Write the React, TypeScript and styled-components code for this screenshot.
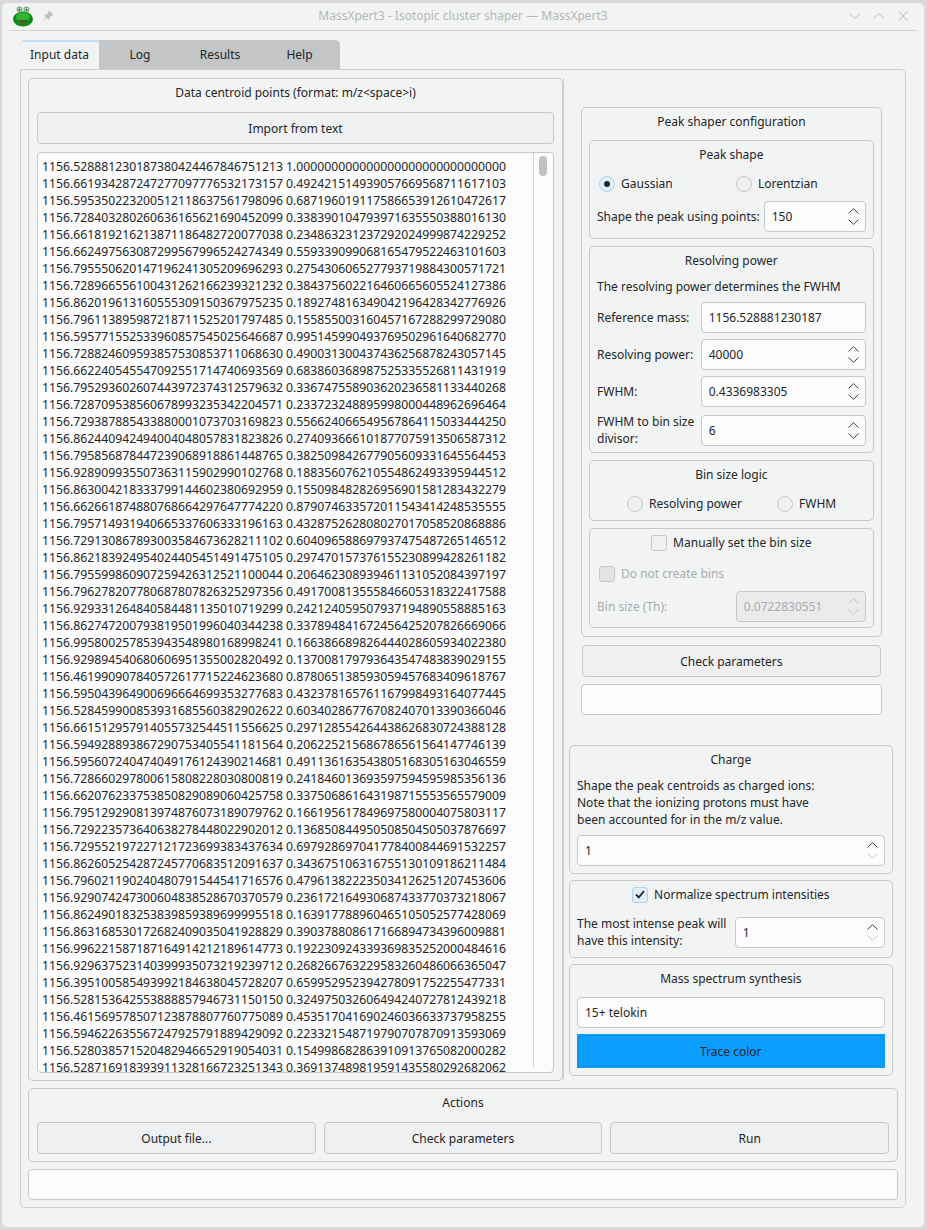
import React from "react";
import styled, { createGlobalStyle } from "styled-components";

const centroidPoints = `1156.528881230187380424467846751213 1.000000000000000000000000000000
1156.661934287247277097776532173157 0.492421514939057669568711617103
1156.595350223200512118637561798096 0.687196019117586653912610472617
1156.728403280260636165621690452099 0.338390104793971635550388016130
1156.661819216213871186482720077038 0.234863231237292024999874229252
1156.662497563087299567996524274349 0.559339099068165479522463101603
1156.795550620147196241305209696293 0.275430606527793719884300571721
1156.728966556100431262166239321232 0.384375602216460665605524127386
1156.862019613160555309150367975235 0.189274816349042196428342776926
1156.796113895987218711525201797485 0.155855003160457167288299729080
1156.595771552533960857545025646687 0.995145990493769502961640682770
1156.728824609593857530853711068630 0.490031300437436256878243057145
1156.662240545547092551714740693569 0.683860368987525335526811431919
1156.795293602607443972374312579632 0.336747558903620236581133440268
1156.728709538560678993235342204571 0.233723248895998000448962696464
1156.729387885433880001073703169823 0.556624066549567864115033444250
1156.862440942494004048057831823826 0.274093666101877075913506587312
1156.795856878447239068918861448765 0.382509842677905609331645564453
1156.928909935507363115902990102768 0.188356076210554862493395944512
1156.863004218333799144602380692959 0.155098482826956901581283432279
1156.662661874880768664297647774220 0.879074633572011543414248535555
1156.795714931940665337606333196163 0.432875262808027017058520868886
1156.729130867893003584673628211102 0.604096588697937475487265146512
1156.862183924954024405451491475105 0.297470157376155230899428261182
1156.795599860907259426312521100044 0.206462308939461131052084397197
1156.796278207780687807826325297356 0.491700813555846605318322417588
1156.929331264840584481135010719299 0.242124059507937194890558885163
1156.862747200793819501996040344238 0.337894841672456425207826669066
1156.995800257853943548980168998241 0.166386689826444028605934022380
1156.929894540680606951355002820492 0.137008179793643547483839029155
1156.461990907840572617715224623680 0.878065138593059457683409618767
1156.595043964900696664699353277683 0.432378165761167998493164077445
1156.528459900853931685560382902622 0.603402867767082407013390366046
1156.661512957914055732544511556625 0.297128554264438626830724388128
1156.594928893867290753405541181564 0.206225215686786561564147746139
1156.595607240474049176124390214681 0.491136163543805168305163046559
1156.728660297800615808228030800819 0.241846013693597594595985356136
1156.662076233753850829089060425758 0.337506861643198715553565579009
1156.795129290813974876073189079762 0.166195617849697580004075803117
1156.729223573640638278448022902012 0.136850844950508504505037876697
1156.729552197227121723699383437634 0.697928697041778400844691532257
1156.862605254287245770683512091637 0.343675106316755130109186211484
1156.796021190240480791544541716576 0.479613822235034126251207453606
1156.929074247300604838528670370579 0.236172164930687433770373218067
1156.862490183253839859389699995518 0.163917788960465105052577428069
1156.863168530172682409035041928829 0.390378808617166894734396009881
1156.996221587187164914212189614773 0.192230924339369835252000484616
1156.929637523140399935073219239712 0.268266763229583260486066365047
1156.395100585493992184638045728207 0.659952952394278091752255477331
1156.528153642553888857946731150150 0.324975032606494240727812439218
1156.461569578507123878807760775089 0.453517041690246036633737958255
1156.594622635567247925791889429092 0.223321548719790707870913593069
1156.528038571520482946652919054031 0.154998682863910913765082000282
1156.528716918393911328166723251343 0.369137489819591435580292682062`.split("\n");

const GlobalStyle = createGlobalStyle`
  html, body {
    margin: 0;
    padding: 0;
    background: #d8d9da;
  }
  body {
    font-family: "Noto Sans", sans-serif;
    font-size: 12px;
    line-height: 17px;
    color: #232629;
  }
`;

const Window = styled("div")`
  box-sizing: border-box;
  width: 922px;
  height: 1224px;
  margin: 3px 0 0 2px;
  background: #f2f4f4;
  border-radius: 5px;
  overflow: hidden;
  display: flex;
  flex-direction: column;
`;

const TitleBar = styled("div")`
  box-sizing: border-box;
  height: 28px;
  flex: none;
  margin: 0 7px;
  padding: 0 6px 2px 3px;
  display: flex;
  align-items: center;
  gap: 8px;
  border-bottom: 1px solid #cfd1d2;
  position: relative;
`;

const TitleText = styled("div")`
  position: absolute;
  left: 0;
  right: 0;
  text-align: center;
  color: #b4b6b7;
`;

const TitleButtons = styled("div")`
  margin-left: auto;
  display: flex;
  gap: 8px;
  color: #b6b8b9;
`;

const Body = styled("div")`
  flex: 1;
  padding: 9px 18px 20px;
  display: flex;
  flex-direction: column;
`;

const TabBar = styled("div")`
  display: flex;
  width: 320px;
  height: 30px;
  flex: none;
  background: #c3c5c6;
  border-radius: 5px 5px 0 0;
  overflow: hidden;
`;

const Tab = styled("div")<{ $active?: boolean; $width: number }>`
  width: ${(p) => p.$width}px;
  display: flex;
  align-items: center;
  justify-content: center;
  padding-bottom: 3px;
  box-sizing: border-box;
  background: ${(p) => (p.$active ? "#f2f4f4" : "transparent")};
  border-top: 2px solid ${(p) => (p.$active ? "#bfe0f7" : "transparent")};
`;

const TabPane = styled("div")`
  flex: 1;
  box-sizing: border-box;
  border: 1px solid #cdcfd0;
  border-radius: 0 5px 5px 5px;
  margin-top: -1px;
  padding: 8px 7px 7px;
  display: flex;
  flex-direction: column;
  gap: 7px;
`;

const Split = styled("div")`
  display: flex;
  height: 1003px;
  flex: none;
`;

const Group = styled("section")<{ $bottom?: number }>`
  box-sizing: border-box;
  border: 1px solid #c5c7c8;
  border-radius: 5px;
  padding: 5px 7px ${(p) => p.$bottom ?? 5}px;
  display: flex;
  flex-direction: column;
  gap: 6px;
`;

const DataGroup = styled(Group)`
  width: 535px;
  flex: none;
  padding: 5px 8px 7px;
  gap: 8px;
`;

const GroupTitle = styled("div")`
  text-align: center;
  margin-bottom: 3px;
`;

const Note = styled("div")`
  margin-bottom: 1px;
`;

const Button = styled("button")`
  box-sizing: border-box;
  height: 32px;
  flex: none;
  font: inherit;
  color: inherit;
  background: #eff0f1;
  border: 1px solid #c5c7c8;
  border-radius: 4px;
  padding: 0;
`;

const DataEdit = styled("div")`
  flex: 1;
  min-height: 0;
  box-sizing: border-box;
  background: #fcfcfc;
  border: 1px solid #c5c7c8;
  border-radius: 4px;
  display: flex;
  overflow: hidden;
`;

const DataLines = styled("div")`
  flex: 1;
  padding: 5px 0 0 4px;
  font-size: 12.23px;
  white-space: nowrap;
  overflow: hidden;
`;

const ScrollTrack = styled("div")`
  width: 20px;
  flex: none;
  margin-bottom: 4px;
  border-left: 1px solid #d4d6d7;
  padding: 3px 0 0 5px;
  box-sizing: border-box;
`;

const ScrollThumb = styled("div")`
  width: 8px;
  height: 20px;
  background: #bfc1c2;
  border-radius: 4px;
`;

const RightColumn = styled("div")`
  flex: 1;
  border-left: 1px solid #d0d2d3;
  padding: 0 7px 5px 5px;
  display: flex;
  flex-direction: column;
`;

const ShaperColumn = styled("div")`
  padding: 29px 11px 0 12px;
  display: flex;
  flex-direction: column;
  margin-bottom: 30px;
`;

const ShaperGroup = styled(Group)`
  gap: 7px;
  height: 530px;
`;

const CheckButton = styled(Button)`
  margin: 8px 1px 7px;
`;

const ChargeColumn = styled("div")`
  display: flex;
  flex-direction: column;
  gap: 6px;
`;

const RadioRow = styled("div")<{ $columns: string; $indent?: number }>`
  display: grid;
  grid-template-columns: ${(p) => p.$columns};
  padding-left: ${(p) => p.$indent ?? 0}px;
  height: 23px;
  align-items: center;
`;

const Option = styled("label")<{ $disabled?: boolean }>`
  display: flex;
  align-items: center;
  gap: 6px;
  color: ${(p) => (p.$disabled ? "#a9abac" : "inherit")};
`;

const Radio = styled("span")<{ $checked?: boolean }>`
  box-sizing: border-box;
  width: 16px;
  height: 16px;
  border-radius: 50%;
  flex: none;
  border: 1px solid ${(p) => (p.$checked ? "#a9d4f2" : "#c5c7c8")};
  background: ${(p) => (p.$checked ? "#dfeefa" : "#eff0f1")};
  display: flex;
  align-items: center;
  justify-content: center;

  &::after {
    content: "";
    display: ${(p) => (p.$checked ? "block" : "none")};
    width: 6px;
    height: 6px;
    border-radius: 50%;
    background: #232629;
  }
`;

const Box = styled("span")<{ $checked?: boolean; $disabled?: boolean }>`
  box-sizing: border-box;
  width: 16px;
  height: 16px;
  border-radius: 3px;
  flex: none;
  border: 1px solid ${(p) => (p.$checked ? "#a9d4f2" : "#c5c7c8")};
  background: ${(p) => (p.$checked ? "#dfeefa" : p.$disabled ? "#e3e4e5" : "#eff0f1")};
  display: flex;
  align-items: center;
  justify-content: center;
`;

const CheckTitle = styled("div")<{ $below: number }>`
  display: flex;
  justify-content: center;
  margin-bottom: ${(p) => p.$below}px;
`;

const FieldRow = styled("div")<{ $field: number }>`
  display: grid;
  grid-template-columns: 1fr ${(p) => p.$field}px;
  column-gap: 4px;
  align-items: center;
  min-height: 31px;
`;

const FieldLabel = styled("div")<{ $disabled?: boolean }>`
  white-space: nowrap;
  color: ${(p) => (p.$disabled ? "#a9abac" : "inherit")};
`;

const Field = styled("div")<{ $disabled?: boolean }>`
  box-sizing: border-box;
  height: 31px;
  background: ${(p) => (p.$disabled ? "#eaebec" : "#fcfcfc")};
  color: ${(p) => (p.$disabled ? "#a9abac" : "inherit")};
  border: 1px solid #c5c7c8;
  border-radius: 4px;
  padding: 0 6px 0 7px;
  display: flex;
  align-items: center;
  justify-content: space-between;
`;

const Arrows = styled("span")`
  display: flex;
  flex-direction: column;
  gap: 5px;
`;

const StatusLine = styled("div")`
  box-sizing: border-box;
  height: 31px;
  flex: none;
  background: #fcfcfc;
  border: 1px solid #c5c7c8;
  border-radius: 4px;
`;

const TraceButton = styled("button")`
  box-sizing: border-box;
  height: 34px;
  font: inherit;
  color: inherit;
  padding: 1px;
  background: #0a9eff;
  border: 0;
  border-radius: 0;
`;

const TraceFace = styled("span")`
  box-sizing: border-box;
  display: flex;
  align-items: center;
  justify-content: center;
  height: 100%;
  border: 1px solid #0b8ee2;
  border-radius: 4px;
`;

const ActionsGroup = styled(Group)`
  flex: none;
  padding: 5px 8px 7px;
  gap: 8px;
  height: 74px;
`;

const ActionsRow = styled("div")`
  display: grid;
  grid-template-columns: repeat(3, 1fr);
  gap: 8px;
`;

function Chevron({ up, muted }: { up?: boolean; muted?: boolean }) {
  return (
    <svg width="11" height="6" viewBox="0 0 11 6" fill="none" stroke={muted ? "#c3c5c6" : "#3b3e41"} strokeWidth="1">
      <path d={up ? "M0.5 5.5 L5.5 0.7 L10.5 5.5" : "M0.5 0.5 L5.5 5.3 L10.5 0.5"} />
    </svg>
  );
}

function Spin({ value, disabled, downMuted }: { value: string; disabled?: boolean; downMuted?: boolean }) {
  return (
    <Field $disabled={disabled}>
      <span>{value}</span>
      <Arrows>
        <Chevron up muted={disabled} />
        <Chevron muted={disabled || downMuted} />
      </Arrows>
    </Field>
  );
}

function TitleChevron({ d }: { d: string }) {
  return (
    <svg width="16" height="16" viewBox="0 0 16 16" fill="none" stroke="currentColor" strokeWidth="1">
      <path d={d} />
    </svg>
  );
}

function FrogIcon() {
  return (
    <svg width="22" height="22" viewBox="0 0 22 22">
      <ellipse cx="11" cy="14" rx="10" ry="7.5" fill="#0f8a1a" />
      <ellipse cx="11" cy="12" rx="7" ry="4.5" fill="#2fb52f" />
      <circle cx="7.5" cy="4.5" r="3" fill="#7bb27c" />
      <circle cx="14.5" cy="4.5" r="3" fill="#7bb27c" />
      <circle cx="7.5" cy="4.5" r="1.7" fill="#d8dcd8" />
      <circle cx="14.5" cy="4.5" r="1.7" fill="#d8dcd8" />
      <circle cx="7.5" cy="4.7" r="0.9" fill="#2a2a2a" />
      <circle cx="14.5" cy="4.7" r="0.9" fill="#2a2a2a" />
      <path d="M6 15 Q11 18 16 15 Q11 16 6 15 Z" fill="#222" />
      <ellipse cx="10.5" cy="17" rx="2" ry="1.4" fill="#c0262b" />
    </svg>
  );
}

function PinIcon() {
  return (
    <svg width="12" height="12" viewBox="0 0 12 12" fill="#bcbebf">
      <path d="M7 0.5 L11.5 5 L10.4 5.6 L9.6 5.2 L7.4 7.2 L7.6 9.2 L6.8 10 L2 5.2 L2.8 4.4 L4.8 4.6 L6.8 2.4 L6.4 1.6 Z" />
      <path d="M3.4 7.6 L0.8 11.2 L4.4 8.6 Z" />
    </svg>
  );
}

export default function App() {
  return (
    <>
      <GlobalStyle />
      <Window>
        <TitleBar>
          <FrogIcon />
          <PinIcon />
          <TitleText>MassXpert3 - Isotopic cluster shaper — MassXpert3</TitleText>
          <TitleButtons>
            <TitleChevron d="M3 5.5 L8 10.5 L13 5.5" />
            <TitleChevron d="M3 10.5 L8 5.5 L13 10.5" />
            <TitleChevron d="M3.5 3.5 L12.5 12.5 M12.5 3.5 L3.5 12.5" />
          </TitleButtons>
        </TitleBar>
        <Body>
          <TabBar>
            <Tab $active $width={79}>Input data</Tab>
            <Tab $width={82}>Log</Tab>
            <Tab $width={78}>Results</Tab>
            <Tab $width={81}>Help</Tab>
          </TabBar>
          <TabPane>
            <Split>
              <DataGroup>
                <GroupTitle>Data centroid points (format: m/z&lt;space&gt;i)</GroupTitle>
                <Button>Import from text</Button>
                <DataEdit>
                  <DataLines>
                    {centroidPoints.map((line) => (
                      <div key={line}>{line}</div>
                    ))}
                  </DataLines>
                  <ScrollTrack>
                    <ScrollThumb />
                  </ScrollTrack>
                </DataEdit>
              </DataGroup>
              <RightColumn>
                <ShaperColumn>
                  <ShaperGroup>
                    <GroupTitle>Peak shaper configuration</GroupTitle>
                    <Group $bottom={6}>
                      <GroupTitle>Peak shape</GroupTitle>
                      <RadioRow $columns="137px 1fr" $indent={2}>
                        <Option><Radio $checked />Gaussian</Option>
                        <Option><Radio />Lorentzian</Option>
                      </RadioRow>
                      <FieldRow $field={102}>
                        <FieldLabel>Shape the peak using points:</FieldLabel>
                        <Spin value="150" />
                      </FieldRow>
                    </Group>
                    <Group>
                      <GroupTitle>Resolving power</GroupTitle>
                      <Note>The resolving power determines the FWHM</Note>
                      <FieldRow $field={165}>
                        <FieldLabel>Reference mass:</FieldLabel>
                        <Field>1156.528881230187</Field>
                      </FieldRow>
                      <FieldRow $field={165}>
                        <FieldLabel>Resolving power:</FieldLabel>
                        <Spin value="40000" />
                      </FieldRow>
                      <FieldRow $field={165}>
                        <FieldLabel>FWHM:</FieldLabel>
                        <Spin value="0.4336983305" />
                      </FieldRow>
                      <FieldRow $field={165}>
                        <FieldLabel>
                          FWHM to bin size
                          <br />
                          divisor:
                        </FieldLabel>
                        <Spin value="6" />
                      </FieldRow>
                    </Group>
                    <Group>
                      <GroupTitle>Bin size logic</GroupTitle>
                      <RadioRow $columns="150px 1fr" $indent={30}>
                        <Option><Radio />Resolving power</Option>
                        <Option><Radio />FWHM</Option>
                      </RadioRow>
                    </Group>
                    <Group>
                      <CheckTitle $below={5}>
                        <Option><Box />Manually set the bin size</Option>
                      </CheckTitle>
                      <RadioRow $columns="1fr" $indent={2}>
                        <Option $disabled><Box $disabled />Do not create bins</Option>
                      </RadioRow>
                      <FieldRow $field={130}>
                        <FieldLabel $disabled>Bin size (Th):</FieldLabel>
                        <Spin value="0.0722830551" disabled />
                      </FieldRow>
                    </Group>
                  </ShaperGroup>
                  <CheckButton>Check parameters</CheckButton>
                  <StatusLine />
                </ShaperColumn>
                <ChargeColumn>
                  <Group $bottom={7}>
                    <GroupTitle>Charge</GroupTitle>
                    <Note>
                      Shape the peak centroids as charged ions:
                      <br />
                      Note that the ionizing protons must have
                      <br />
                      been accounted for in the m/z value.
                    </Note>
                    <Spin value="1" downMuted />
                  </Group>
                  <Group $bottom={8}>
                    <CheckTitle $below={6}>
                      <Option>
                        <Box $checked>
                          <svg width="10" height="9" viewBox="0 0 10 9" fill="none" stroke="#232629" strokeWidth="1.8">
                            <path d="M1 4.5 L3.8 7.3 L9 1.2" />
                          </svg>
                        </Box>
                        Normalize spectrum intensities
                      </Option>
                    </CheckTitle>
                    <FieldRow $field={150}>
                      <FieldLabel>
                        The most intense peak will
                        <br />
                        have this intensity:
                      </FieldLabel>
                      <Spin value="1" downMuted />
                    </FieldRow>
                  </Group>
                  <Group $bottom={7}>
                    <GroupTitle>Mass spectrum synthesis</GroupTitle>
                    <Field style={{ marginTop: 1 }}>15+ telokin</Field>
                    <TraceButton>
                      <TraceFace>Trace color</TraceFace>
                    </TraceButton>
                  </Group>
                </ChargeColumn>
              </RightColumn>
            </Split>
            <ActionsGroup>
              <GroupTitle>Actions</GroupTitle>
              <ActionsRow>
                <Button>Output file...</Button>
                <Button>Check parameters</Button>
                <Button>Run</Button>
              </ActionsRow>
            </ActionsGroup>
            <StatusLine />
          </TabPane>
        </Body>
      </Window>
    </>
  );
}
